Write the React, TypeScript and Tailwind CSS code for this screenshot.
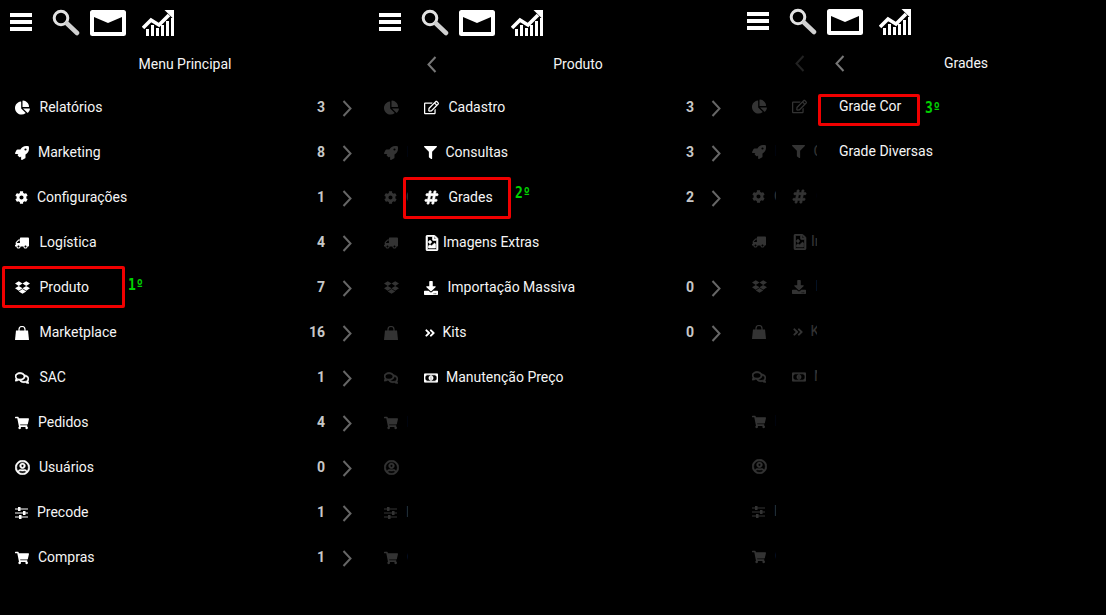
import React from 'react';
import {
  FaChartPie, FaRocket, FaCog, FaTruck, FaDropbox, FaRegComments, FaShoppingCart,
  FaRegUserCircle, FaRegEdit, FaFilter, FaHashtag, FaRegFileImage, FaDownload,
  FaAngleDoubleRight, FaRegMoneyBillAlt,
} from 'react-icons/fa';

type Item = {
  icon?: React.ReactNode;
  label: string;
  offset?: string;
  count?: number;
};

const BagIcon = () => (
  <svg width="14" height="14" viewBox="0 0 14 14" fill="currentColor">
    <path d="M4 5 V3.5 A3 3 0 0 1 10 3.5 V5" fill="none" stroke="currentColor" strokeWidth="1.2" />
    <path d="M1 4.5 H13 L14 14 H0 Z" />
  </svg>
);

const SlidersIcon = () => (
  <svg width="13" height="12" viewBox="0 0 13 12" fill="currentColor">
    <rect x="0" y="1.5" width="13" height="1" />
    <rect x="0" y="5.5" width="13" height="1" />
    <rect x="0" y="9.5" width="13" height="1" />
    <rect x="3" y="0" width="2.5" height="4" />
    <rect x="8" y="4" width="2.5" height="4" />
    <rect x="4" y="8" width="2.5" height="4" />
  </svg>
);

const mainMenu: Item[] = [
  { icon: <FaChartPie className="text-[15px]" />, label: 'Relatórios', offset: 'w-[24.5px]', count: 3 },
  { icon: <FaRocket />, label: 'Marketing', offset: 'w-[23px]', count: 8 },
  { icon: <FaCog className="text-[13px]" />, label: 'Configurações', offset: 'w-[22px]', count: 1 },
  { icon: <FaTruck className="-scale-x-100" />, label: 'Logística', offset: 'w-[24.5px]', count: 4 },
  { icon: <FaDropbox className="text-[15px]" />, label: 'Produto', offset: 'w-[24.5px]', count: 7 },
  { icon: <BagIcon />, label: 'Marketplace', offset: 'w-[24.5px]', count: 16 },
  { icon: <FaRegComments className="stroke-[30px]" />, label: 'SAC', offset: 'w-[24.5px]', count: 1 },
  { icon: <FaShoppingCart />, label: 'Pedidos', offset: 'w-[23px]', count: 4 },
  { icon: <FaRegUserCircle className="text-[15px] stroke-[20px]" />, label: 'Usuários', offset: 'w-[24px]', count: 0 },
  { icon: <SlidersIcon />, label: 'Precode', offset: 'w-[22px]', count: 1 },
  { icon: <FaShoppingCart />, label: 'Compras', offset: 'w-[23px]', count: 1 },
];

const productMenu: Item[] = [
  { icon: <FaRegEdit className="text-[15px]" />, label: 'Cadastro', offset: 'w-[24.5px]', count: 3 },
  { icon: <FaFilter className="text-[13px]" />, label: 'Consultas', offset: 'w-[21.5px]', count: 3 },
  { icon: <FaHashtag className="text-[15px] stroke-[30px]" />, label: 'Grades', offset: 'w-[24.5px]', count: 2 },
  { icon: <FaRegFileImage className="text-[16px] stroke-[20px]" />, label: 'Imagens Extras', offset: 'w-[19px]' },
  { icon: <FaDownload />, label: 'Importação Massiva', offset: 'w-[23.5px]', count: 0 },
  { icon: <FaAngleDoubleRight className="text-[12px]" />, label: 'Kits', offset: 'w-[18.5px]', count: 0 },
  { icon: <FaRegMoneyBillAlt className="stroke-[30px]" />, label: 'Manutenção Preço', offset: 'w-[22px]' },
];

const gradesMenu: Item[] = [{ label: 'Grade Cor' }, { label: 'Grade Diversas' }];

const Chevron: React.FC<{ back?: boolean; className?: string }> = ({ back, className }) => (
  <svg width="10" height="17" viewBox="0 0 10 17" fill="none" className={className}>
    <path
      d={back ? 'M8.5 1 L1.5 8.5 L8.5 16' : 'M1.5 1 L8.5 8.5 L1.5 16'}
      stroke="currentColor"
      strokeWidth="2"
    />
  </svg>
);

const TopIcons: React.FC = () => (
  <div className="flex items-start h-[46px] pt-[9px] pl-[10px]">
    <div className="w-[22px] mt-[4px] flex flex-col gap-[3px]">
      <div className="h-[4px] bg-white"></div>
      <div className="h-[4px] bg-white"></div>
      <div className="h-[4px] bg-white"></div>
    </div>
    <svg width="28" height="27" viewBox="0 0 28 27" fill="none" className="ml-[20px]">
      <circle cx="9" cy="9" r="6.8" stroke="#e2e2e2" strokeWidth="3" />
      <path d="M15 14.5 L25 24" stroke="#d0d0d0" strokeWidth="4.5" strokeLinecap="round" />
    </svg>
    <svg width="36" height="26" viewBox="0 0 36 26" className="ml-[10px] mt-[1px]">
      <path
        fillRule="evenodd"
        fill="#fff"
        d="M2.5 0 H33.5 A2.5 2.5 0 0 1 36 2.5 V23.5 A2.5 2.5 0 0 1 33.5 26 H2.5 A2.5 2.5 0 0 1 0 23.5 V2.5 A2.5 2.5 0 0 1 2.5 0 Z M4 7 V22 H32 V7 L18 13 Z"
      />
    </svg>
    <svg width="33" height="27" viewBox="0 0 33 27" fill="#fff" className="ml-[16px] mt-[1px]">
      <path d="M1 18 L9 10 L17 15 L27 5" fill="none" stroke="#fff" strokeWidth="3.6" />
      <path d="M22.5 0 H32 V9.5 Z" />
      <rect x="4" y="19" width="3" height="7" />
      <rect x="9" y="15" width="3" height="11" />
      <rect x="14" y="18" width="3" height="8" />
      <rect x="19" y="15" width="3" height="11" />
      <rect x="24" y="11" width="3" height="15" />
      <rect x="29" y="8" width="3" height="18" />
    </svg>
  </div>
);

// item of a previous menu, pushed aside and cut off by the panel over it
const Ghost: React.FC<{ item?: Item; clip: string; column: string }> = ({ item, clip, column }) => (
  <div className={`shrink-0 ${column}`}>
    {item && (
      <div className={`flex items-center overflow-hidden whitespace-nowrap opacity-20 text-white ${clip}`}>
        <span className={`shrink-0 text-[14px] ${item.offset}`}>{item.icon}</span>
        <span>{item.label}</span>
      </div>
    )}
  </div>
);

const Row: React.FC<{ item: Item; chevronGap?: string }> = ({ item, chevronGap = 'ml-[17px]' }) => (
  <>
    {item.icon && <span className={`shrink-0 text-[14px] text-white ${item.offset}`}>{item.icon}</span>}
    <span className="flex-1 text-[#f5f5f5]">{item.label}</span>
    {item.count !== undefined && <span className="font-bold text-[#c8c8c8]">{item.count}</span>}
    {item.count !== undefined && <Chevron className={`mt-[1px] text-[#666] ${chevronGap}`} />}
  </>
);

const Highlight: React.FC<{ box: string; tag: string; mark: string }> = ({ box, tag, mark }) => (
  <>
    <div className={`absolute border-[3px] border-[#f00000] rounded-[2px] ${box}`}></div>
    <span className={`absolute font-['DejaVu_Sans_Mono',monospace] font-bold text-[13px] leading-none text-[#00d000] scale-y-120 origin-top-left ${tag}`}>
      {mark}
    </span>
  </>
);

export default function App() {
  return (
    <div className="flex h-screen overflow-hidden bg-black font-['Roboto',sans-serif] text-[14px]">
      {/* Menu Principal */}
      <div className="w-[369px] shrink-0">
        <TopIcons />
        <div className="h-[36px] mb-[3px] flex items-center justify-center pl-[1px] text-[#f5f5f5]">Menu Principal</div>
        {mainMenu.map((item) => (
          <div key={item.label} className="relative h-[45px] flex items-center pl-[15px] pr-[17px]">
            <Row item={item} />
            {item.label === 'Produto' && (
              <Highlight box="left-[2px] top-[1px] w-[123px] h-[42px]" tag="left-[128px] top-[12px]" mark="1º" />
            )}
          </div>
        ))}
      </div>

      {/* Produto */}
      <div className="w-[368px] shrink-0">
        <TopIcons />
        <div className="h-[36px] mb-[3px] flex items-center pl-[58px] pr-[18px] text-[#f5f5f5]">
          <Chevron back className="text-[#777]" />
          <span className="flex-1 text-center">Produto</span>
        </div>
        {mainMenu.map((ghost, i) => {
          const item = productMenu[i];
          return (
            <div key={ghost.label} className="relative h-[45px] flex items-center pl-[15px] pr-[16px]">
              <Ghost item={ghost} clip="w-[24px]" column="w-[40px]" />
              {item && <Row item={item} chevronGap="ml-[17px]" />}
              {item?.label === 'Grades' && (
                <Highlight box="left-[34px] top-[2px] w-[108px] h-[42px]" tag="left-[146px] top-[10px]" mark="2º" />
              )}
            </div>
          );
        })}
      </div>

      {/* Grades */}
      <div className="flex-1 -mt-px">
        <TopIcons />
        <div className="h-[36px] mb-[3px] flex items-center pl-[58px] pr-[17px] text-[#f5f5f5]">
          <div className="w-[40px] shrink-0">
            <Chevron back className="text-[#222]" />
          </div>
          <Chevron back className="text-[#777]" />
          <span className="w-[242px] text-center">Grades</span>
        </div>
        {mainMenu.map((ghost, i) => {
          const item = gradesMenu[i];
          return (
            <div key={ghost.label} className="relative h-[45px] flex items-center pl-[15px] pr-[17px]">
              <Ghost item={ghost} clip="w-[24px]" column="w-[40px]" />
              <Ghost item={productMenu[i]} clip="w-[25px]" column="w-[47px]" />
              {item && <Row item={item} />}
              {item?.label === 'Grade Cor' && (
                <Highlight box="left-[81px] top-[10px] w-[102px] h-[32px]" tag="left-[188px] top-[16px]" mark="3º" />
              )}
            </div>
          );
        })}
      </div>
    </div>
  );
}
